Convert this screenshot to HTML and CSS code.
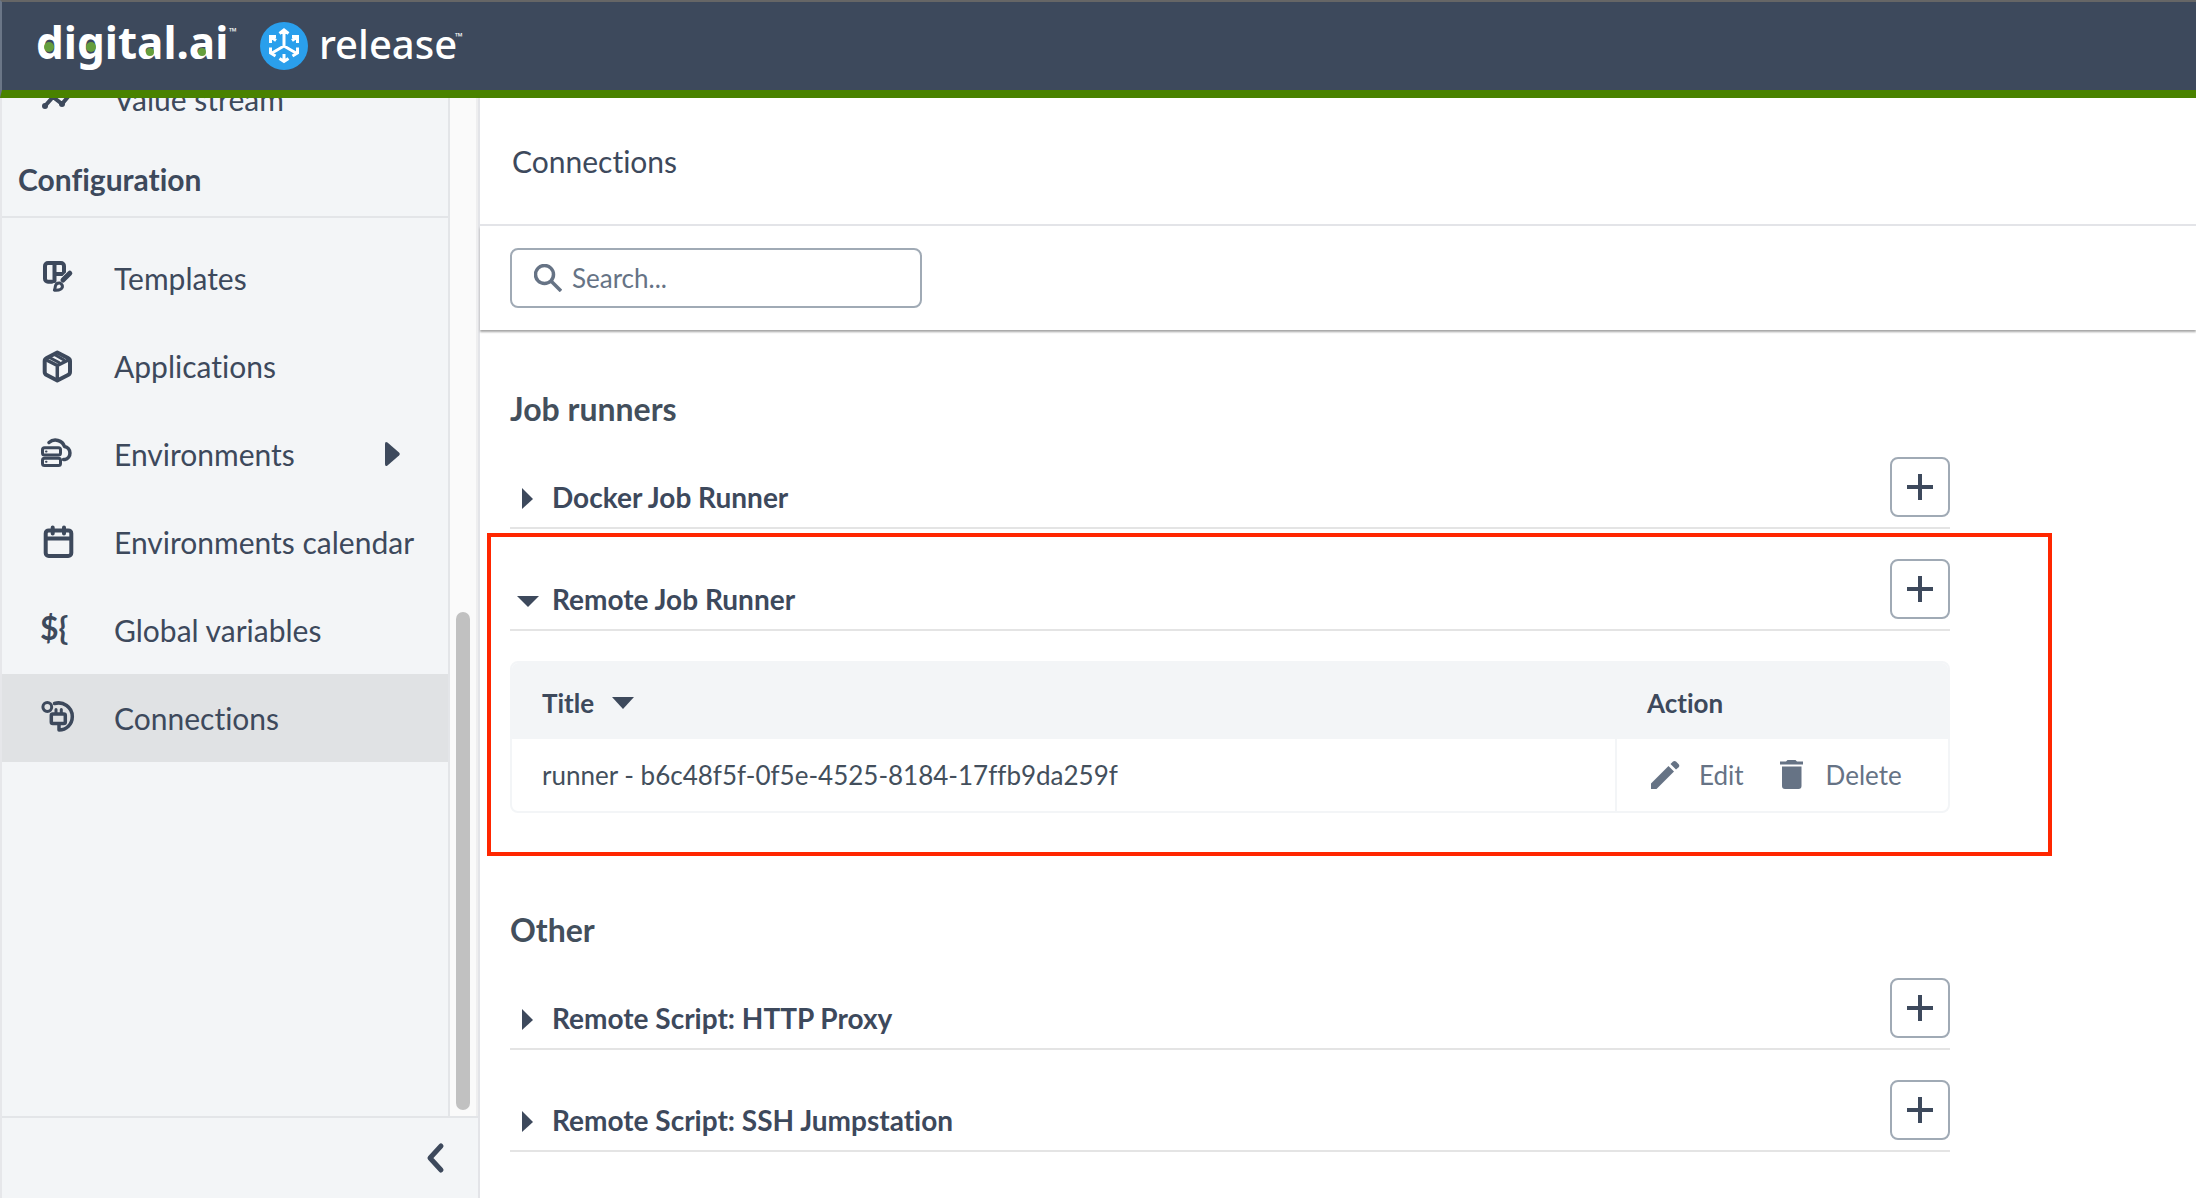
FILE: index.html
```html
<!DOCTYPE html>
<html lang="en">
<head>
<meta charset="utf-8">
<title>Connections - Release</title>
<link rel="stylesheet" href="styles.css">
</head>
<body>
<header class="topbar">
  <a class="brand" href="#" aria-label="digital.ai release">
    <svg class="brand-logo" width="204" height="76" viewBox="0 0 204 76">
      <text class="logo-name" x="0" y="51">digital.ai</text>
      <text class="logo-tm" x="193" y="27">™</text>
      <g class="logo-dots"><circle cx="13" cy="39" r="5"/><circle cx="55" cy="39" r="5"/><circle cx="114" cy="44" r="4"/><circle cx="166" cy="44" r="4"/></g>
    </svg>
    <svg class="brand-mark" width="48" height="48" viewBox="0 0 48 48">
      <circle class="mark-disc" cx="24" cy="24" r="24"/>
      <path class="mark-lines" d="M24 8v16L12 31M24 24l12 7M19.500 11.500L24 8l4.500 3.500M10.500 21v-6.500h5.500M11 15l5 3.500M37.500 21v-6.500H32M37 15l-5 3.500M10.500 25.500V31l5 3M37.500 25.500V31l-5 3M24 32v7M19.500 36.500L24 39.500l4.500-3"/>
    </svg>
    <svg class="brand-product" width="148" height="76" viewBox="0 0 148 76">
      <text class="product-name" x="0" y="51">release</text>
      <text class="logo-tm" x="136" y="32">™</text>
    </svg>
  </a>
</header>
<div class="shell">
  <aside class="sidebar">
    <div class="sidebar-scroll">
      <nav class="nav">
        <a class="nav-item nav-item-first" href="#">
          <svg class="icon" viewBox="0 0 34 34"><path d="M5 24l8-9 9 7 10-12"/><circle class="fill" cx="5" cy="24" r="3"/><circle class="fill" cx="13" cy="15" r="3"/><circle class="fill" cx="22" cy="22" r="3"/></svg>
          <span>Value stream</span>
        </a>
        <h2 class="nav-heading">Configuration</h2>
        <div class="nav-list">
          <a class="nav-item" href="#">
            <svg class="icon" viewBox="0 0 34 34"><path d="M12 20.800H8a3 3 0 0 1-3-3V5a3 3 0 0 1 3-3h13a3 3 0 0 1 3 3v8H14.500M14.500 2v18"/><path class="halo" d="M31 12l-7 7"/><path class="thick" d="M29.800 12.200L23 19"/><path class="thin bristle" d="M20 22c-3-.3-4.200 1-4.600 3-.2 1.500-.4 2.800-1 4.200 4 .3 7.200-.2 8-3 .3-1.700 0-2.700-2.400-4.200z"/></svg>
            <span>Templates</span>
          </a>
          <a class="nav-item" href="#">
            <svg class="icon" viewBox="0 0 34 34"><path d="M17.300 3.500l10.700 5.500q2 1 2 3v11q0 2-2 3l-10.700 5.500L6.700 26q-2-1-2-3V12q0-2 2-3z"/><path class="mid" d="M5.500 10.500l11.800 6 12-6M17.300 17v14"/><path class="thin" d="M9.500 8.500l9.500 5M14.500 5.500l9.500 5.500"/></svg>
            <span>Applications</span>
          </a>
          <a class="nav-item" href="#">
            <svg class="icon" viewBox="0 0 34 34"><g class="thin"><rect x="2.500" y="10.800" width="18" height="7.200" rx="2"/><rect x="2.500" y="21.200" width="18" height="7.200" rx="2"/><path class="dot" d="M6 14.400h.5M6 24.800h.5"/></g><path class="mid" d="M9 5.500A9.500 9 0 0 1 24.500 9.500A6.700 6.700 0 0 1 24.800 22.600H23.500"/></svg>
            <span>Environments</span>
            <svg class="nav-more" viewBox="0 0 16 26"><path d="M1 3q0-3 2.500-1.500L15 11.500q1.500 1.500 0 3L3.500 24.500Q1 26 1 23z"/></svg>
          </a>
          <a class="nav-item" href="#">
            <svg class="icon" viewBox="0 0 34 34"><rect x="5.700" y="5.400" width="25.600" height="25.600" rx="3"/><path d="M6 13.500h25M12.700 2.400v6M24 2.400v6"/></svg>
            <span>Environments calendar</span>
          </a>
          <a class="nav-item" href="#">
            <svg class="icon" viewBox="0 0 34 34"><text class="icon-text" x="0" y="27">${</text></svg>
            <span>Global variables</span>
          </a>
          <a class="nav-item is-active" href="#" aria-current="page">
            <svg class="icon" viewBox="0 0 34 34"><circle class="thin" cx="7.300" cy="6" r="4.400"/><path class="mid" d="M14.500 2.500C23 0 32.300 6 32.300 15.500c0 8-6 13.300-13.300 13.500v-5"/><rect class="mid" x="11.300" y="13" width="14" height="9.500" rx="1.500"/><path class="thin" d="M16 8.500V12M21.300 8.500V12"/></svg>
            <span>Connections</span>
          </a>
        </div>
      </nav>
      <div class="scroll-track"><div class="scroll-thumb"></div></div>
    </div>
    <div class="sidebar-foot">
      <button class="collapse" type="button" aria-label="Collapse sidebar">
        <svg width="20" height="32" viewBox="0 0 20 32"><path d="M15 4L4 16l11 12"/></svg>
      </button>
    </div>
  </aside>
  <main class="main">
    <div class="page-title"><h1>Connections</h1></div>
    <div class="toolbar">
      <label class="search">
        <svg width="28" height="28" viewBox="0 0 28 28"><circle cx="10.500" cy="10.500" r="9"/><path d="M17 17l10 10"/></svg>
        <input type="text" placeholder="Search..." aria-label="Search">
      </label>
    </div>
    <div class="content">
      <section class="group">
        <h2 class="group-title">Job runners</h2>
        <div class="row">
          <button class="row-toggle" type="button" aria-expanded="false"><svg class="caret" viewBox="0 0 22 24"><path d="M5 3l11 11L5 24z"/></svg>Docker Job Runner</button>
          <button class="add" type="button" aria-label="Add Docker Job Runner"><svg viewBox="0 0 26 26"><path d="M13 0v26M0 13h26"/></svg></button>
        </div>
        <div class="highlighted">
          <div class="row">
            <button class="row-toggle" type="button" aria-expanded="true"><svg class="caret" viewBox="0 0 22 24"><path d="M0 9h22L11 20z"/></svg>Remote Job Runner</button>
            <button class="add" type="button" aria-label="Add Remote Job Runner"><svg viewBox="0 0 26 26"><path d="M13 0v26M0 13h26"/></svg></button>
          </div>
          <table class="runners">
            <thead>
              <tr>
                <th scope="col"><button class="sort" type="button">Title<svg width="22" height="12" viewBox="0 0 22 12"><path d="M0 0h22L11 12z"/></svg></button></th>
                <th scope="col" class="col-action">Action</th>
              </tr>
            </thead>
            <tbody>
              <tr>
                <td>runner - b6c48f5f-0f5e-4525-8184-17ffb9da259f</td>
                <td class="col-action">
                  <div class="actions">
                    <button class="action" type="button"><svg width="36" height="36" viewBox="0 0 36 36"><path d="M4 26.500L21.500 9l5.500 5.500L9.500 32H4zM23.500 7l2.500-2.500q1.500-1 3 0l2.700 2.700q1.200 1.500 0 3L29 12.500z"/></svg>Edit</button>
                    <button class="action" type="button"><svg width="36" height="36" viewBox="0 0 36 36"><path d="M6 4.500h6L13.500 3h8l1.500 1.500h6v3H6zM8 9.500h19.500V29q0 3-3 3H11q-3 0-3-3z"/></svg>Delete</button>
                  </div>
                </td>
              </tr>
            </tbody>
          </table>
          <div class="highlight-frame"></div>
        </div>
      </section>
      <section class="group">
        <h2 class="group-title">Other</h2>
        <div class="row">
          <button class="row-toggle" type="button" aria-expanded="false"><svg class="caret" viewBox="0 0 22 24"><path d="M5 3l11 11L5 24z"/></svg>Remote Script: HTTP Proxy</button>
          <button class="add" type="button" aria-label="Add HTTP Proxy"><svg viewBox="0 0 26 26"><path d="M13 0v26M0 13h26"/></svg></button>
        </div>
        <div class="row">
          <button class="row-toggle" type="button" aria-expanded="false"><svg class="caret" viewBox="0 0 22 24"><path d="M5 3l11 11L5 24z"/></svg>Remote Script: SSH Jumpstation</button>
          <button class="add" type="button" aria-label="Add SSH Jumpstation"><svg viewBox="0 0 26 26"><path d="M13 0v26M0 13h26"/></svg></button>
        </div>
      </section>
    </div>
  </main>
</div>
</body>
</html>
```
FILE: styles.css
```css
* { box-sizing: border-box; }

body {
  margin: 0;
  height: 100vh;
  display: flex;
  flex-direction: column;
  overflow: hidden;
  background: #fff;
  color: #3d495c;
  font: 28px/40px Lato, "Liberation Sans", sans-serif;
  font-variant-ligatures: none;
}

h1, h2 { margin: 0; font-size: inherit; }
button { margin: 0; padding: 0; border: 0; background: none; color: inherit; font: inherit; cursor: pointer; }
a { color: inherit; text-decoration: none; }
svg { display: block; flex: none; }

/* Top bar */
.topbar {
  flex: none;
  height: 98px;
  padding-left: 34px;
  border-top: 2px solid #666;
  border-bottom: 8px solid #498200;
  border-left: 2px solid #6b7687;
  background: #3d495c;
  display: flex;
  align-items: center;
}
.brand { display: flex; align-items: center; gap: 20px; }
.brand-product { margin-left: -9px; }
.brand text { fill: #fff; }
.logo-name { font: 700 44px "Noto Sans", sans-serif; }
.product-name { font: 500 40px "Noto Sans", sans-serif; }
.logo-tm { font: 10px "Noto Sans", sans-serif; }
.logo-dots { fill: #659e3c; }
.mark-disc { fill: #2a9fec; }
.mark-lines { fill: none; stroke: #fff; stroke-width: 3; }

/* Layout */
.shell { flex: 1; min-height: 0; display: flex; }

/* Sidebar */
.sidebar {
  flex: none;
  width: 480px;
  border-left: 2px solid #e6e7ea;
  border-right: 2px solid #e3e4e8;
  background: #f3f5f7;
  display: flex;
  flex-direction: column;
  font-size: 30px;
}
.sidebar-scroll { flex: 1; min-height: 0; display: flex; overflow: hidden; }
.nav { flex: 1; min-width: 0; border-right: 2px solid #e3e5e8; }
.nav-item {
  height: 88px;
  padding: 0 16px 0 38px;
  display: flex;
  align-items: center;
  gap: 40px;
  white-space: nowrap;
}
.nav-item-first { margin-top: -43px; }
.nav-item.is-active { background: #e0e2e4; }
.nav-heading {
  height: 75px;
  padding: 16px 16px 0;
  border-bottom: 2px solid #e3e5e8;
  font-weight: 700;
}
.nav-list { padding-top: 16px; }
.icon { width: 34px; height: 34px; overflow: visible; fill: none; stroke: #3d495c; stroke-width: 4; stroke-linecap: round; stroke-linejoin: round; }
.icon .thick { stroke-width: 5; }
.icon .mid { stroke-width: 3.5; }
.icon .thin { stroke-width: 3; }
.icon .dot { stroke-width: 2; }
.icon .bristle { fill: #f3f5f7; }
.icon .halo { stroke: #f3f5f7; stroke-width: 8; }
.icon .fill { fill: #3d495c; stroke: none; }
.icon-text { font: 700 32px Lato, sans-serif; fill: #3d495c; stroke: none; }
.nav-more { width: 16px; height: 26px; margin: 0 32px 0 auto; fill: #3d495c; }
.scroll-track { flex: none; width: 28px; padding: 514px 6px 6px; border-right: 2px solid #eeeeef; background: #fafafa; display: flex; }
.scroll-thumb { width: 16px; border-radius: 8px; background: #c1c1c1; }
.sidebar-foot {
  flex: none;
  height: 82px;
  padding: 0 32px;
  border-top: 2px solid #e3e5e8;
  display: flex;
  align-items: center;
  justify-content: flex-end;
}
.collapse path { fill: none; stroke: #3d495c; stroke-width: 5; stroke-linecap: round; stroke-linejoin: round; }

/* Page head */
.main { flex: 1; min-width: 0; }
.page-title { height: 128px; padding: 43px 32px; border-bottom: 2px solid #e3e4e8; }
.page-title h1 { font-size: 30px; font-weight: 400; }
.toolbar { height: 104px; padding: 22px 30px; box-shadow: 0 2px 2px #a6a6a6; }
.search {
  width: 412px;
  height: 60px;
  padding: 0 22px;
  border: 2px solid #a0aab5;
  border-radius: 8px;
  display: flex;
  align-items: center;
  gap: 10px;
}
.search svg { fill: none; stroke: #667385; stroke-width: 3.5; }
.search input { flex: 1; min-width: 0; padding: 0; border: 0; outline: 0; background: none; color: #3d495c; font: 26px/40px Lato, sans-serif; }
.search input::placeholder { color: #667385; opacity: 1; }

/* Connection groups */
.content { max-width: 1500px; padding: 61px 30px 0; }
.group + .group { margin-top: 99px; }
.group-title { font-size: 32px; line-height: 36px; color: #434f5c; }
.row {
  padding: 30px 0 10px;
  border-bottom: 2px solid #e4e4e4;
  display: flex;
  align-items: flex-end;
  justify-content: space-between;
}
.row-toggle { padding-left: 7px; font-weight: 700; display: flex; align-items: center; gap: 13px; }
.caret { width: 22px; height: 24px; fill: #3d495c; }
.add {
  width: 60px;
  height: 60px;
  border: 2px solid #a0aab5;
  border-radius: 8px;
  display: flex;
  align-items: center;
  justify-content: center;
}
.add svg { width: 26px; height: 26px; }
.add path { stroke: #3d495c; stroke-width: 4; }

/* Runner table */
.highlighted { position: relative; }
.highlight-frame { position: absolute; inset: 4px -102px -43px -23px; border: 4px solid #ff2600; pointer-events: none; }
.runners {
  width: 100%;
  margin-top: 30px;
  border: 2px solid #f3f5f7;
  border-radius: 8px;
  border-spacing: 0;
  overflow: hidden;
  font-size: 26px;
  line-height: 36px;
}
.runners th, .runners td { padding: 0 30px; text-align: left; }
.runners th { height: 76px; padding-top: 4px; background: #f3f5f7; font-weight: 700; }
.runners td { height: 72px; color: #434f5c; }
.runners .col-action { width: 333px; }
.runners th.col-action { padding-left: 32px; }
.runners td.col-action { border-left: 2px solid #f3f5f7; }
.sort { display: flex; align-items: center; gap: 18px; }
.sort svg { fill: #3d495c; }
.actions { display: flex; gap: 30px; }
.action { color: #667385; display: flex; align-items: center; gap: 16px; }
.action svg { fill: #667385; }
```
